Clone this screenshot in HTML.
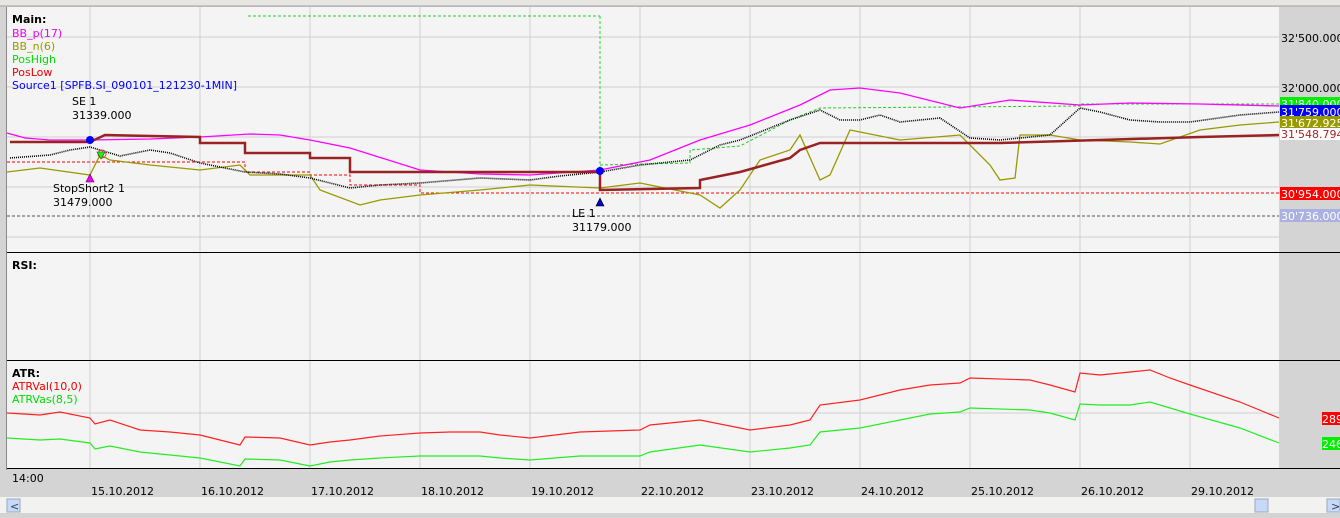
<!DOCTYPE html>
<html><head><style>
body{margin:0;width:1340px;height:513px;overflow:hidden;background:#d4d4d4;font-family:"Liberation Sans",Tahoma,sans-serif;}
svg text{font-family:"DejaVu Sans","Liberation Sans",sans-serif;font-size:11px;}
</style></head><body>
<svg width="1340" height="513" xmlns="http://www.w3.org/2000/svg">
<rect x="0" y="0" width="1340" height="513" fill="#d4d4d4"/>
<rect x="0" y="0" width="1340" height="6" fill="#e8e6e0"/>
<line x1="0" y1="6" x2="1340" y2="6" stroke="#a0a0a0"/>
<rect x="7" y="7" width="1272" height="462" fill="#f4f4f4"/>
<line x1="6.5" y1="7" x2="6.5" y2="470" stroke="#888"/>
<!-- vertical grid -->
<g stroke="#d0d0d0">
<line x1="90" y1="7" x2="90" y2="469"/><line x1="200" y1="7" x2="200" y2="469"/><line x1="310" y1="7" x2="310" y2="469"/><line x1="420" y1="7" x2="420" y2="469"/><line x1="530" y1="7" x2="530" y2="469"/><line x1="640" y1="7" x2="640" y2="469"/><line x1="750" y1="7" x2="750" y2="469"/><line x1="860" y1="7" x2="860" y2="469"/><line x1="970" y1="7" x2="970" y2="469"/><line x1="1080" y1="7" x2="1080" y2="469"/><line x1="1190" y1="7" x2="1190" y2="469"/>
<line x1="7" y1="37" x2="1279" y2="37"/><line x1="7" y1="87" x2="1279" y2="87"/><line x1="7" y1="137" x2="1279" y2="137"/><line x1="7" y1="187" x2="1279" y2="187"/><line x1="7" y1="237" x2="1279" y2="237"/>
<line x1="7" y1="413" x2="1279" y2="413"/>
</g>
<line x1="7" y1="252.5" x2="1340" y2="252.5" stroke="#000"/>
<line x1="7" y1="360.5" x2="1340" y2="360.5" stroke="#000"/>
<line x1="7" y1="468.5" x2="1340" y2="468.5" stroke="#000"/>
<!-- dashed -->
<line x1="7" y1="216" x2="1279" y2="216" stroke="#555" stroke-dasharray="3,2"/>
<polyline fill="none" stroke="#f00" stroke-dasharray="3,2" points="7,162 245,162 245,172 310,172 310,175 350,175 350,185 420,185 420,193 1279,193"/>
<polyline fill="none" stroke="#2c2" stroke-dasharray="3,2" points="248,16 600,16"/>
<line x1="600" y1="16" x2="600" y2="170" stroke="#2d2" stroke-dasharray="3,2"/>
<polyline fill="none" stroke="#2c2" stroke-dasharray="3,2" points="600,165 690,163 690,150 740,146 790,120 820,108 1080,106 1080,104 1279,104"/>
<!-- series -->
<polyline fill="none" stroke="#f0f" stroke-width="1.3" points="7,133 25,138 50,140 90,140 150,139 200,137 250,134 280,135 310,140 350,148 420,170 480,174 530,175 600,170 650,160 700,140 750,125 800,105 830,90 860,88 900,93 960,108 1010,100 1080,105 1130,103 1200,104 1279,106"/>
<polyline fill="none" stroke="#990" stroke-width="1.3" points="7,172 40,168 90,175 100,155 110,160 150,165 200,170 240,165 250,175 310,175 320,190 360,205 380,200 420,195 480,190 530,185 600,188 640,183 700,195 720,208 740,190 760,160 790,150 800,135 820,180 830,175 850,130 900,140 960,135 990,165 1000,180 1015,178 1020,135 1050,135 1080,140 1130,142 1160,144 1200,130 1240,125 1279,122"/>
<polyline fill="none" stroke="#000" stroke-width="1.6" stroke-dasharray="1,1" points="10,158 50,155 70,150 90,147 100,150 120,156 150,150 170,153 200,163 245,172 280,174 310,178 350,188 380,185 420,183 480,178 530,180 560,176 600,172 640,165 690,160 720,145 740,140 790,120 820,110 840,120 860,120 880,115 900,122 940,118 970,138 1000,140 1050,135 1080,108 1100,112 1130,120 1160,122 1190,122 1240,115 1279,112"/>
<polyline fill="none" stroke="#922" stroke-width="2.5" points="10,142 90,142 105,135 200,137 200,143 245,143 245,153 310,153 310,158 350,158 350,172 600,172 600,190 700,188 700,180 740,172 790,158 800,150 820,143 900,143 1000,143 1100,140 1200,137 1279,135"/>
<!-- markers -->
<circle cx="90" cy="140" r="4" fill="#00f"/>
<circle cx="600" cy="171" r="4" fill="#00f"/>
<circle cx="102" cy="154" r="4" fill="none" stroke="#f33"/>
<polygon points="97,152 105,152 101,159" fill="#2e2" stroke="#060" stroke-width=".6"/>
<polygon points="86,182 94,182 90,174" fill="#e0e" stroke="#606" stroke-width=".6"/>
<polygon points="596,206 604,206 600,198" fill="#00c" stroke="#000" stroke-width=".6"/>
<!-- ATR -->
<polyline fill="none" stroke="#f22" stroke-width="1.2" points="7,413 40,415 60,412 90,418 95,424 110,420 140,430 170,432 200,435 240,445 245,437 280,438 310,445 330,442 350,440 380,436 420,433 450,432 480,432 500,435 530,438 580,432 640,430 650,425 700,420 750,430 790,425 810,420 820,405 860,400 900,390 930,385 960,383 970,378 1030,380 1050,385 1075,392 1080,373 1100,375 1130,372 1150,370 1170,378 1190,385 1240,402 1279,418"/>
<polyline fill="none" stroke="#2e2" stroke-width="1.2" points="7,438 40,440 60,439 90,443 95,449 110,446 140,452 170,455 200,458 240,466 245,459 280,460 310,466 330,462 350,460 380,458 420,456 450,456 480,456 500,458 530,460 580,456 640,456 650,452 700,445 750,452 790,448 810,445 820,432 860,428 900,420 930,414 960,412 970,408 1030,410 1050,413 1075,420 1080,404 1100,405 1130,405 1150,402 1170,408 1190,414 1240,428 1279,443"/>
<!-- legends -->
<g font-size="11">
<text x="12" y="23" font-weight="bold" fill="#000">Main:</text>
<text x="12" y="37" fill="#e0e">BB_p(17)</text>
<text x="12" y="50" fill="#990">BB_n(6)</text>
<text x="12" y="63" fill="#0d0">PosHigh</text>
<text x="12" y="76" fill="#e00">PosLow</text>
<text x="12" y="89" fill="#00f">Source1 [SPFB.SI_090101_121230-1MIN]</text>
<text x="72" y="105" fill="#000">SE 1</text>
<text x="72" y="119" fill="#000">31339.000</text>
<text x="53" y="192" fill="#000">StopShort2 1</text>
<text x="53" y="206" fill="#000">31479.000</text>
<text x="572" y="217" fill="#000">LE 1</text>
<text x="572" y="231" fill="#000">31179.000</text>
<text x="12" y="269" font-weight="bold" fill="#000">RSI:</text>
<text x="12" y="377" font-weight="bold" fill="#000">ATR:</text>
<text x="12" y="390" fill="#e00">ATRVal(10,0)</text>
<text x="12" y="403" fill="#0d0">ATRVas(8,5)</text>
<text x="12" y="482" fill="#000">14:00</text>
<text x="91" y="495">15.10.2012</text><text x="201" y="495">16.10.2012</text><text x="311" y="495">17.10.2012</text><text x="421" y="495">18.10.2012</text><text x="531" y="495">19.10.2012</text><text x="641" y="495">22.10.2012</text><text x="751" y="495">23.10.2012</text><text x="861" y="495">24.10.2012</text><text x="971" y="495">25.10.2012</text><text x="1081" y="495">26.10.2012</text><text x="1191" y="495">29.10.2012</text>
</g>
<!-- right axis labels -->
<g font-size="12">
<text x="1281" y="42" fill="#000">32'500.000</text>
<text x="1281" y="92" fill="#000">32'000.000</text>
<rect x="1280" y="97" width="60" height="13" fill="#0e0"/><text x="1281" y="108" fill="#fff">31'840.000</text>
<rect x="1280" y="105" width="60" height="13" fill="#00f"/><text x="1281" y="116" fill="#fff">31'759.000</text>
<rect x="1280" y="116" width="60" height="12" fill="#990"/><text x="1281" y="127" fill="#fff">31'672.925</text>
<rect x="1280" y="128" width="60" height="12" fill="#fff"/><text x="1281" y="138" fill="#a22">31'548.794</text>
<rect x="1280" y="187" width="60" height="13" fill="#f00"/><text x="1281" y="198" fill="#fff">30'954.000</text>
<rect x="1280" y="209" width="60" height="13" fill="#aab0e0"/><text x="1281" y="220" fill="#fff">30'736.000</text>
<rect x="1322" y="412" width="18" height="13" fill="#f00"/><text x="1322" y="423" fill="#fff">289</text>
<rect x="1322" y="437" width="18" height="13" fill="#0e0"/><text x="1322" y="448" fill="#fff">246</text>
</g>
<!-- scrollbar -->
<rect x="0" y="497" width="1340" height="16" fill="#f2f2f0"/>
<rect x="7" y="499" width="13" height="13" fill="#c8d8f8" stroke="#9ab"/>
<text x="10" y="510" font-size="10" fill="#345">&lt;</text>
<rect x="1255" y="499" width="13" height="13" fill="#c8d8f8" stroke="#9ab"/>
<rect x="1327" y="499" width="13" height="13" fill="#c8d8f8" stroke="#9ab"/>
<text x="1331" y="510" font-size="10" fill="#345">&gt;</text>
</svg>
</body></html>
